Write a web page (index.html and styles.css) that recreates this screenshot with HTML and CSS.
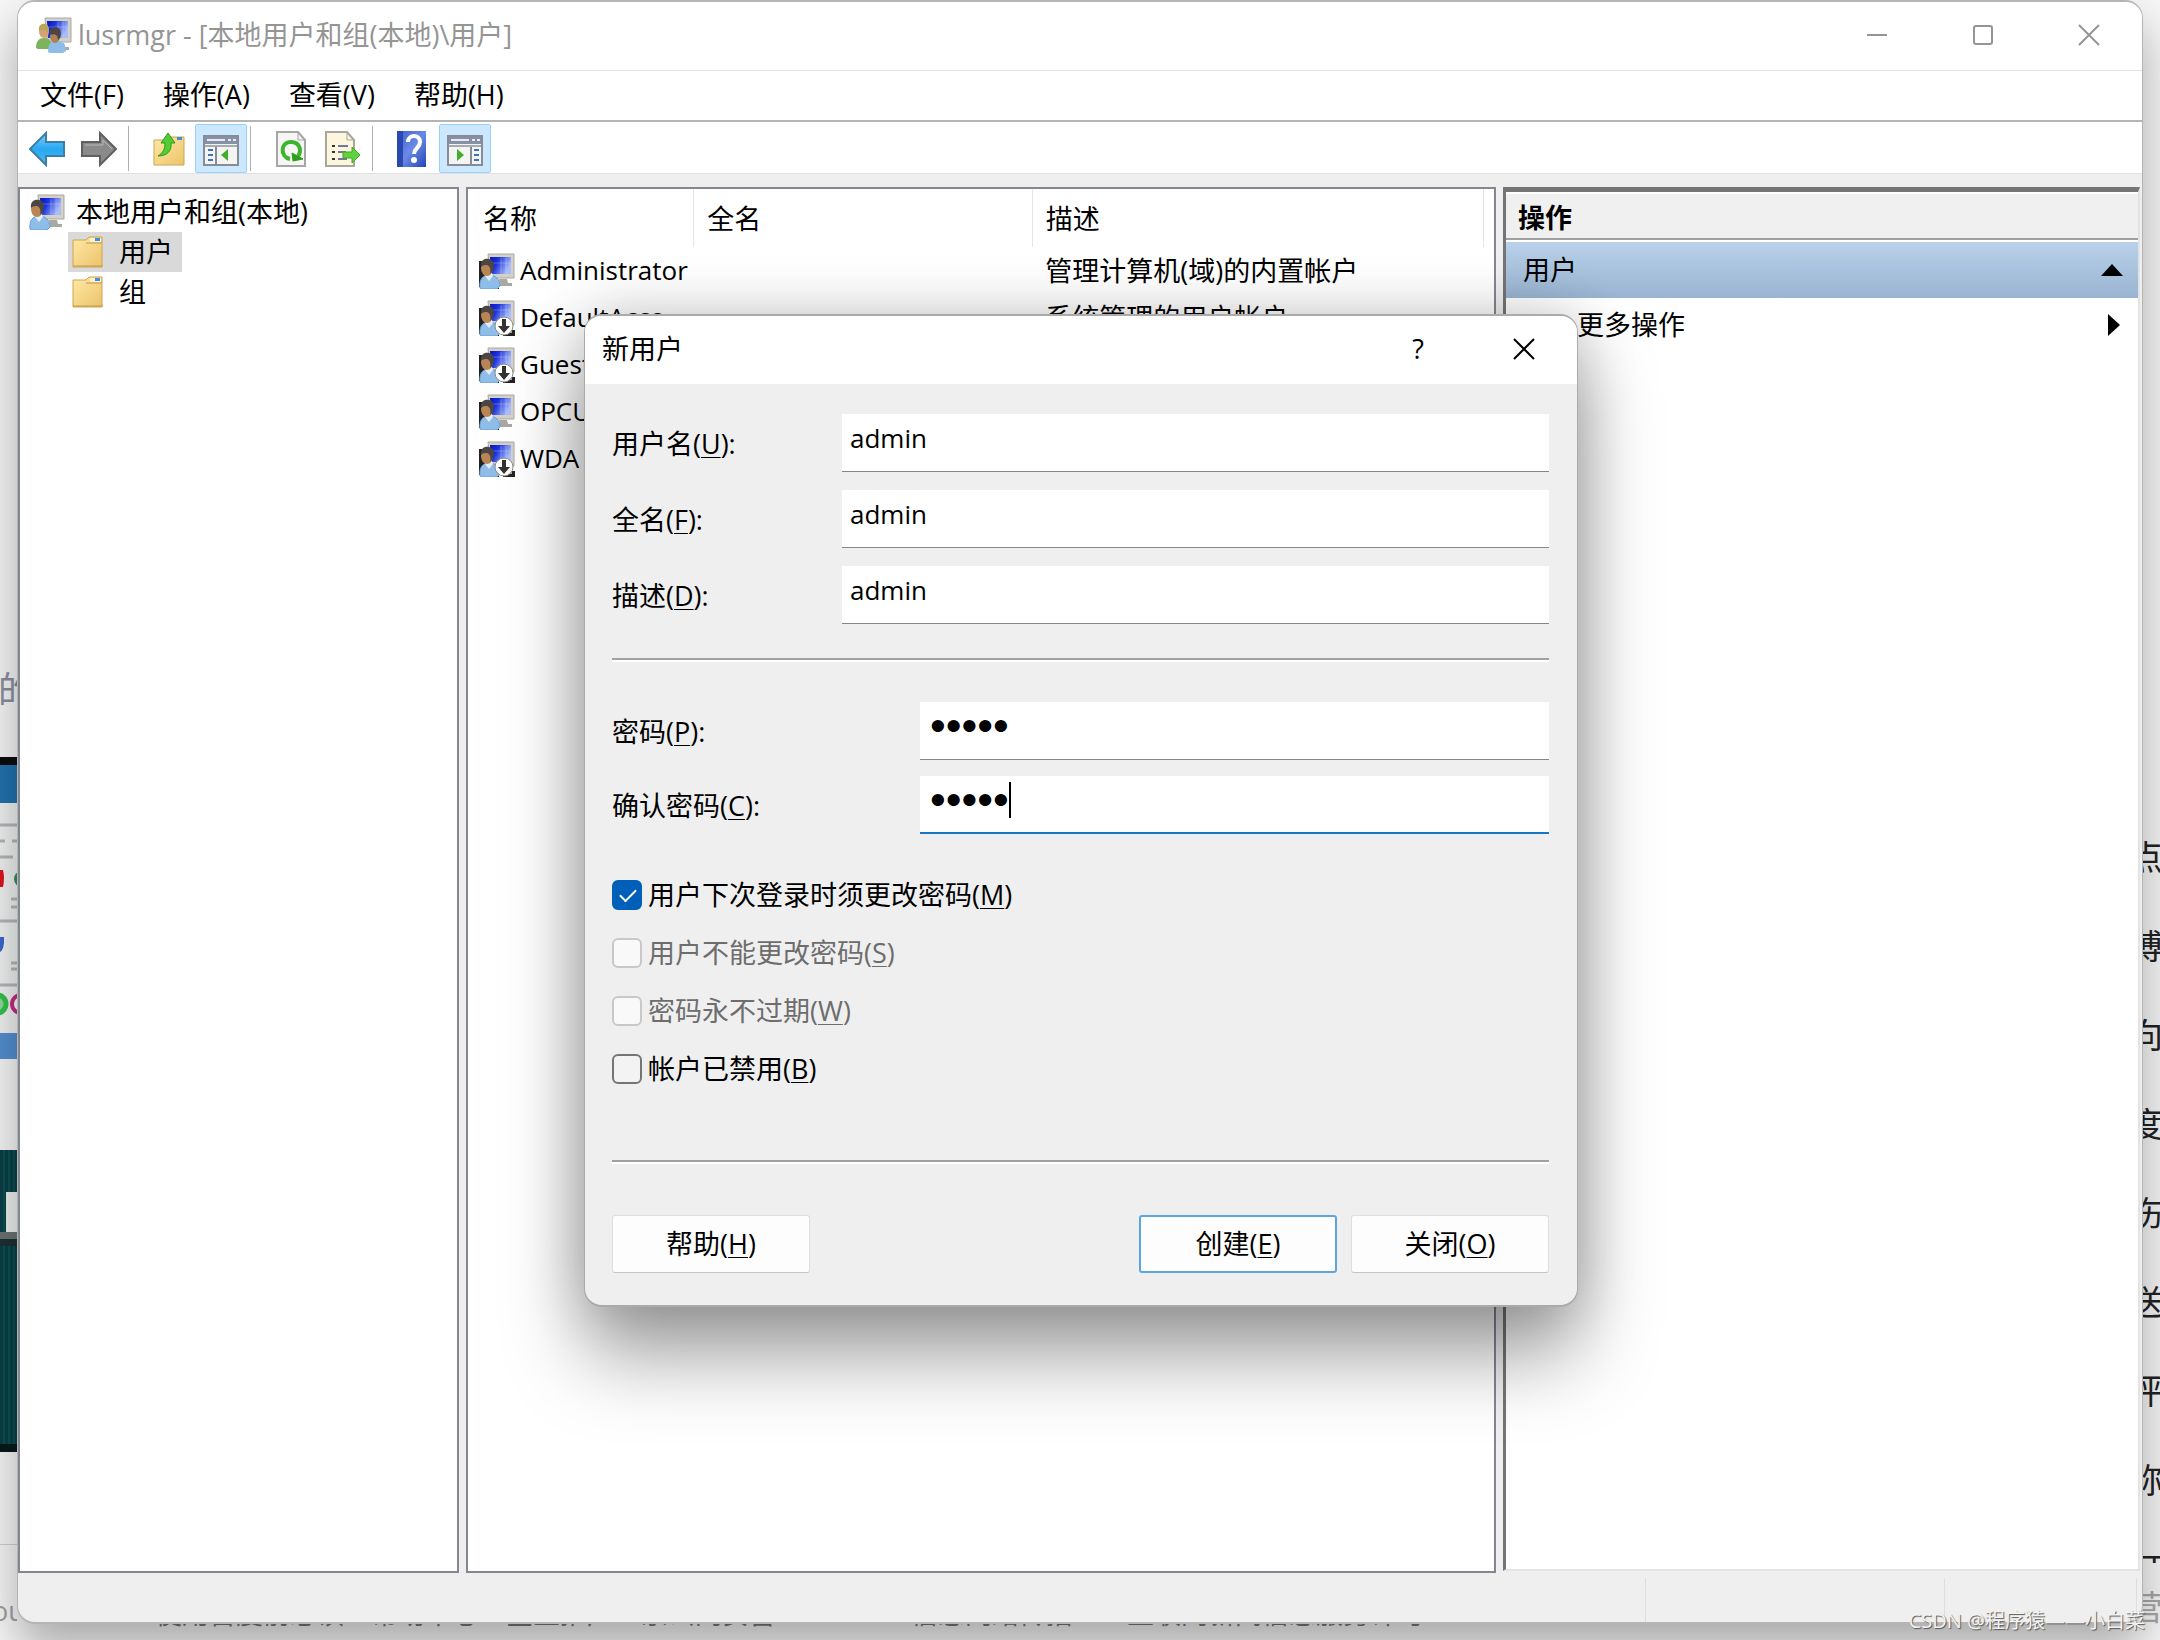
FILE: index.html
```html
<!DOCTYPE html>
<html lang="zh-CN">
<head>
    <meta charset="UTF-8">
    <meta name="viewport" content="width=device-width, initial-scale=1.0">
    <title>lusrmgr - [本地用户和组(本地)\用户]</title>
    <link rel="stylesheet" href="styles.css">
</head>
<body>
    <!-- shared icons -->
    <svg class="defs" width="0" height="0" aria-hidden="true">
        <defs>
            <linearGradient id="screen" x1="0" y1="0" x2="1" y2="0.4">
                <stop offset="0" stop-color="#0a12b8"/>
                <stop offset="0.4" stop-color="#1c34dc"/>
                <stop offset="1" stop-color="#a9bdfb"/>
            </linearGradient>
            <linearGradient id="folderFill" x1="0" y1="0" x2="1" y2="1">
                <stop offset="0" stop-color="#ffe9a6"/>
                <stop offset="1" stop-color="#ecc36a"/>
            </linearGradient>
            <linearGradient id="blueArrow" x1="0" y1="0" x2="0" y2="1">
                <stop offset="0" stop-color="#7fd0fb"/>
                <stop offset="0.5" stop-color="#27a8f2"/>
                <stop offset="1" stop-color="#4fb9ee"/>
            </linearGradient>
            <linearGradient id="helpFill" x1="0" y1="0" x2="1" y2="1">
                <stop offset="0" stop-color="#3a5ed2"/>
                <stop offset="0.5" stop-color="#6b8ae6"/>
                <stop offset="1" stop-color="#2445b4"/>
            </linearGradient>
            <symbol id="monitor" viewBox="0 0 36 36">
                <path d="M20 26h8l1 4h4v3H21z" fill="#a9a9a4"/>
                <path d="M9 1h26v24H11z" fill="#d3d1c8" stroke="#aaa89f"/>
                <path d="M11 4h21v17H12z" fill="url(#screen)"/>
                <path d="M22 5v15M27 5v15M13 10h18" stroke="#fff" stroke-opacity="0.25"/>
            </symbol>
            <symbol id="person" viewBox="0 0 36 36">
                <path d="M1 35c-1-9 3-13 9-13s11 4 11 11l-3 3H3z" fill="#8fbde9" stroke="#6b9cce"/>
                <path d="M6 23l4 5 4-5-1-3H7z" fill="#e4eefa"/>
                <ellipse cx="8" cy="15" rx="6" ry="8" fill="#b98555"/>
                <path d="M2 14C1 7 6 5 10 6c5 1 6 6 4 12l-3 3c1-5 0-8-3-9-2 0-4 0-6 2z" fill="#4b4644"/>
            </symbol>
            <symbol id="user" viewBox="0 0 36 36">
                <use href="#monitor"/>
                <use href="#person"/>
            </symbol>
            <symbol id="userRow" viewBox="0 0 36 36">
                <path d="M0 8h6v26H0zM0 30h20v6H3z" fill="#222"/>
                <use href="#user"/>
            </symbol>
            <symbol id="users" viewBox="0 0 36 36">
                <use href="#monitor"/>
                <path d="M0 31c0-7 3-10 8-10s8 3 8 9l-3 2H2z" fill="#7db35e"/>
                <ellipse cx="8" cy="14" rx="5" ry="7" fill="#d5a373"/>
                <path d="M3 14c-1-6 3-8 6-7 4 1 5 5 3 9-2-3-5-4-9-2z" fill="#b9a55c"/>
                <path d="M12 35c0-8 3-11 8-11 6 0 10 3 10 10l-3 2H14z" fill="#8fbde9"/>
                <ellipse cx="19" cy="19" rx="5" ry="7" fill="#b07f55"/>
                <path d="M14 18c-1-6 3-8 6-8 5 1 6 6 4 11l-2 2c0-4-2-7-8-5z" fill="#4b4644"/>
            </symbol>
            <symbol id="userOff" viewBox="0 0 36 36">
                <path d="M24 30h12v6H24z" fill="#222"/>
                <use href="#userRow"/>
                <circle cx="25" cy="26" r="9" fill="#fff" stroke="#8b8b8b"/>
                <path d="M23 19h4v7h4l-6 7-6-7h4z" fill="#333"/>
            </symbol>
            <symbol id="folder" viewBox="0 0 32 32">
                <path d="M1 4h13l3-3h13v30H1z" fill="url(#folderFill)" stroke="#cda550"/>
                <path d="M18 2h11v4H18z" fill="#fff2cd"/>
                <path d="M23 2h5v3h-5z" fill="#3d8fe0"/>
                <path d="M14 7h16M1 30h30" stroke="#c3984a"/>
            </symbol>
            <symbol id="frame" viewBox="0 0 36 32">
                <path d="M1 1h34v29H1z" fill="#f4f4f2" stroke="#868c98" stroke-width="2"/>
                <path d="M2 2h32v7H2z" fill="#8791a3"/>
                <path d="M4 5h18M25 5h3M30 5h3" stroke="#e6eaf2" stroke-width="2"/>
                <path d="M2 11h32" stroke="#a5abb5" stroke-width="2"/>
            </symbol>
        </defs>
    </svg>

    <div class="strip left">
        <div class="page-word">的的</div>
        <div class="shot phone">
            <i class="bar-black"></i>
            <i class="bar-blue"></i>
            <svg class="apps" viewBox="0 0 18 230">
                <path d="M0 22h18M0 38h5M12 38h6M0 54h13M11 96h7M11 104h7M0 118h18M11 160h7M11 166h7M0 182h18" stroke="#b4b8bb" stroke-width="3"/>
                <path d="M0 67h3q2 8 0 17H0z" fill="#e0141c"/>
                <circle cx="22" cy="76" r="8" fill="#39915a"/>
                <path d="M0 134h4v6q-1 8-4 9z" fill="#3b68d0"/>
                <circle cx="22" cy="138" r="5" fill="#e57a3c"/>
                <circle cx="-3" cy="201" r="9" fill="#8fdc9b" stroke="#35c24b" stroke-width="5"/>
                <circle cx="21" cy="201" r="9" fill="#fff" stroke="#c42c84" stroke-width="4"/>
            </svg>
            <i class="bar-foot"></i>
        </div>
        <div class="shot curtain">
            <i class="letter"></i>
            <i class="shade"></i>
        </div>
        <div class="page-rule"></div>
        <div class="page-foot">ou</div>
    </div>

    <main class="window">
        <header class="titlebar">
            <svg class="app-icon"><use href="#users"/></svg>
            <h1>lusrmgr - [本地用户和组(本地)\用户]</h1>
            <div class="caption">
                <button type="button" aria-label="最小化"><svg viewBox="0 0 20 20"><path d="M0 10h20"/></svg></button>
                <button type="button" aria-label="最大化"><svg viewBox="0 0 20 20"><rect x="1" y="1" width="18" height="18" rx="2"/></svg></button>
                <button type="button" aria-label="关闭"><svg viewBox="0 0 20 20"><path d="M0 0l20 20M20 0L0 20"/></svg></button>
            </div>
        </header>

        <nav class="menubar">
            <button type="button">文件(F)</button>
            <button type="button">操作(A)</button>
            <button type="button">查看(V)</button>
            <button type="button">帮助(H)</button>
        </nav>

        <div class="toolbar">
            <button type="button" aria-label="后退">
                <svg viewBox="0 0 36 36"><path d="M1 18L17 2v9h18v14H17v9z" fill="url(#blueArrow)" stroke="#3d7ea8" stroke-width="2"/></svg>
            </button>
            <button type="button" aria-label="前进">
                <svg viewBox="0 0 36 36"><path d="M35 18L19 2v9H1v14h18v9z" fill="#8a8a8a" stroke="#606060" stroke-width="2"/><path d="M4 14h18V9l9 9" fill="none" stroke="#b9b9b9"/></svg>
            </button>
            <span class="sep"></span>
            <button type="button" aria-label="上一级">
                <svg viewBox="0 0 36 36"><path d="M3 9h13l3-3h14v28H3z" fill="url(#folderFill)" stroke="#cda550"/><path d="M26 6h5v3h-5z" fill="#3d8fe0"/><path d="M7 25c5-3 7-7 7-13h-4l7-10 7 10h-4c1 8-4 13-13 13z" fill="#52cc34" stroke="#2e9a1c"/></svg>
            </button>
            <button type="button" class="pressed" aria-label="显示/隐藏控制台树">
                <svg viewBox="0 0 36 36"><use href="#frame" y="4" width="36" height="32"/><path d="M13 16v17" stroke="#868c98" stroke-width="2"/><path d="M5 19h5M5 24h5M5 29h5" stroke="#3f74b8" stroke-width="2"/><path d="M25 18v12l-7-6z" fill="#3fae2a"/></svg>
            </button>
            <span class="sep"></span>
            <button type="button" aria-label="刷新">
                <svg viewBox="0 0 36 36"><path d="M4 1h21l7 8v26H4z" fill="#f6f6f4" stroke="#a5a5a5" stroke-width="2"/><path d="M25 1v8h7" fill="none" stroke="#a5a5a5"/><path d="M17 28c-10-2-10-17 1-17 9 0 11 9 7 14" fill="none" stroke="#3bb52c" stroke-width="4"/><path d="M19 22l11 6-10 2z" fill="#2c9e1e" stroke="#2c9e1e"/></svg>
            </button>
            <button type="button" aria-label="导出列表">
                <svg viewBox="0 0 36 36"><path d="M1 1h21l7 8v26H1z" fill="#fcf6df" stroke="#a9a79c" stroke-width="2"/><path d="M22 1v8h7" fill="none" stroke="#a9a79c"/><path d="M7 15h3M7 21h3M7 28h3" stroke="#333" stroke-width="2"/><path d="M13 15h10M13 21h8M13 28h9" stroke="#77749a" stroke-width="2"/><path d="M18 21h9v-5l8 8-8 8v-5h-9z" fill="#5fd33c" stroke="#43a82c"/></svg>
            </button>
            <span class="sep"></span>
            <button type="button" aria-label="帮助">
                <svg viewBox="0 0 36 36"><path d="M2 0h29v36H2z" fill="url(#helpFill)"/><path d="M2 0h6v36H2z" fill="#2a48b0"/><path d="M13 11c0-8 12-8 12 0 0 6-6 6-6 12" fill="none" stroke="#fff" stroke-width="4"/><circle cx="19" cy="29" r="3" fill="#fff"/></svg>
            </button>
            <button type="button" class="pressed" aria-label="显示/隐藏操作窗格">
                <svg viewBox="0 0 36 36"><use href="#frame" y="4" width="36" height="32"/><path d="M24 16v17" stroke="#868c98" stroke-width="2"/><path d="M27 19h5M27 24h5M27 29h5" stroke="#3f74b8" stroke-width="2"/><path d="M10 18v12l7-6z" fill="#3fae2a"/></svg>
            </button>
        </div>

        <div class="panes">
            <ul class="pane tree">
                <li><svg class="icon"><use href="#user"/></svg>本地用户和组(本地)</li>
                <li class="child"><span class="node selected"><svg class="folder"><use href="#folder"/></svg>用户</span></li>
                <li class="child"><span class="node"><svg class="folder"><use href="#folder"/></svg>组</span></li>
            </ul>

            <div class="pane list">
                <table>
                    <colgroup><col class="c-name"><col class="c-full"><col class="c-desc"><col></colgroup>
                    <thead>
                        <tr><th>名称</th><th>全名</th><th>描述</th><th></th></tr>
                    </thead>
                    <tbody>
                        <tr><td><svg class="icon"><use href="#userRow"/></svg>Administrator</td><td></td><td>管理计算机(域)的内置帐户</td><td></td></tr>
                        <tr><td><svg class="icon"><use href="#userOff"/></svg>DefaultAcco...</td><td></td><td>系统管理的用户帐户</td><td></td></tr>
                        <tr><td><svg class="icon"><use href="#userOff"/></svg>Guest</td><td></td><td></td><td></td></tr>
                        <tr><td><svg class="icon"><use href="#userRow"/></svg>OPCU</td><td></td><td></td><td></td></tr>
                        <tr><td><svg class="icon"><use href="#userOff"/></svg>WDA</td><td></td><td></td><td></td></tr>
                    </tbody>
                </table>
            </div>

            <aside class="actions">
                <h2>操作</h2>
                <button type="button" class="group">用户<svg viewBox="0 0 22 12"><path d="M0 12L11 0l11 12z"/></svg></button>
                <button type="button" class="more">更多操作<svg viewBox="0 0 12 22"><path d="M0 0l12 11L0 22z"/></svg></button>
            </aside>
        </div>

        <footer class="statusbar"><span></span><span></span><span></span></footer>

        <form class="dialog" role="dialog" aria-labelledby="dialog-title">
            <div class="dialog-title">
                <h2 id="dialog-title">新用户</h2>
                <button type="button" aria-label="说明">?</button>
                <button type="button" aria-label="关闭"><svg viewBox="0 0 20 20"><path d="M0 0l20 20M20 0L0 20"/></svg></button>
            </div>
            <div class="dialog-body">
                <div class="fields">
                    <label for="username">用户名(<u>U</u>):</label>
                    <input type="text" id="username" value="admin">
                    <label for="fullname">全名(<u>F</u>):</label>
                    <input type="text" id="fullname" value="admin">
                    <label for="desc">描述(<u>D</u>):</label>
                    <input type="text" id="desc" value="admin">
                </div>
                <hr>
                <div class="fields secret">
                    <label for="password">密码(<u>P</u>):</label>
                    <input type="password" id="password" value="admin">
                    <label for="confirm">确认密码(<u>C</u>):</label>
                    <div class="focused">
                        <input type="password" id="confirm" value="admin">
                        <span class="caret"></span>
                    </div>
                </div>
                <div class="checks">
                    <label><input type="checkbox" checked>用户下次登录时须更改密码(<u>M</u>)</label>
                    <label class="off"><input type="checkbox" disabled>用户不能更改密码(<u>S</u>)</label>
                    <label class="off"><input type="checkbox" disabled>密码永不过期(<u>W</u>)</label>
                    <label><input type="checkbox">帐户已禁用(<u>B</u>)</label>
                </div>
                <hr>
                <div class="buttons">
                    <button type="button" class="help">帮助(<u>H</u>)</button>
                    <button type="button" class="default">创建(<u>E</u>)</button>
                    <button type="button">关闭(<u>O</u>)</button>
                </div>
            </div>
        </form>
    </main>

    <div class="strip right">
        <span>点</span>
        <span>博</span>
        <span>向</span>
        <span>度</span>
        <span>伤</span>
        <span>送</span>
        <span>评</span>
        <span>称</span>
        <span class="cut">订</span>
        <span class="dim">营</span>
    </div>

    <div class="strip bottom"><p>使用百度前必读　帮助中心　企业推广　京公网安备　　　　　信息网络传播　　互联网新闻信息服务许可</p></div>
    <div class="watermark">CSDN @程序猿——小白菜</div>
</body>
</html>
```

FILE: styles.css
```css
* {
    box-sizing: border-box;
}
body {
    position: relative;
    display: grid;
    grid-template-columns: 17px 1fr 17px;
    grid-template-rows: 1fr 16px;
    min-height: 100vh;
    margin: 0;
    overflow: hidden;
    background: #f7f7f7;
    color: #000;
    font-family: "Open Sans", "Noto Sans CJK SC", sans-serif;
    font-size: 27px;
    line-height: 36px;
}
.defs {
    position: absolute;
}
h1, h2, p, ul {
    margin: 0;
    padding: 0;
    font-size: 27px;
    font-weight: normal;
}
button, input {
    font: inherit;
    color: inherit;
}
button {
    padding: 0;
    border: 0;
    background: none;
}
u {
    text-decoration-thickness: 1px;
    text-underline-offset: 3px;
}

/* page behind the window */
.strip {
    overflow: hidden;
    min-width: 0;
    white-space: nowrap;
}
.left {
    display: flex;
    flex-direction: column;
    grid-row: 1 / 3;
    padding-top: 666px;
}
.page-word {
    height: 91px;
    color: #8a90a0;
    font-size: 36px;
    line-height: 48px;
    text-indent: -38px;
}
.shot {
    display: flex;
    flex-direction: column;
}
.phone {
    height: 302px;
    background: #f1f3f3;
}
.bar-black {
    height: 8px;
    background: #0c0c0e;
}
.bar-blue {
    height: 38px;
    background: #2272b0;
}
.apps {
    width: 18px;
    height: 230px;
}
.bar-foot {
    height: 26px;
    background: #5490d2;
}
.curtain {
    height: 302px;
    margin-top: 91px;
    background: repeating-linear-gradient(90deg, #0b3f45 0 3px, #0a5158 3px 5px);
    border-bottom: 8px solid #071a18;
}
.letter {
    height: 40px;
    margin-top: 42px;
    background: linear-gradient(90deg, transparent 6px, #eef2f1 6px);
}
.shade {
    height: 14px;
    background: linear-gradient(#6c7473 50%, #1d3030 50%);
}
.page-rule {
    height: 1px;
    margin-top: 92px;
    background: #d0d0d0;
}
.page-foot {
    margin-top: 48px;
    color: #a0a0a0;
    font-size: 27px;
    text-indent: -8px;
}
.right {
    display: flex;
    flex-direction: column;
    grid-column: 3;
    grid-row: 1 / 3;
    padding-top: 813px;
    color: #222;
    font-size: 34px;
}
.right span {
    height: 89px;
    line-height: 89px;
    margin-left: -14px;
}
.right .cut {
    height: 38px;
    overflow: hidden;
}
.right .dim {
    height: 76px;
    color: #a8a8a8;
}
.bottom {
    grid-column: 2;
    grid-row: 2;
    padding-left: 138px;
    color: #777;
}
.bottom p {
    margin-top: -28px;
}
.watermark {
    position: absolute;
    right: 15px;
    bottom: 5px;
    z-index: 3;
    color: #f2f2f2;
    font-size: 20px;
    line-height: 28px;
    text-shadow: 1px 1px 1px #555;
}

/* console window */
.window {
    position: relative;
    z-index: 1;
    display: flex;
    flex-direction: column;
    grid-column: 2;
    grid-row: 1;
    border: 2px solid #b5b5b5;
    border-left-width: 1px;
    border-right-width: 1px;
    border-radius: 18px;
    background: #efefef;
    box-shadow: 0 24px 48px rgba(0, 0, 0, 0.32);
}
.titlebar {
    display: flex;
    align-items: center;
    height: 69px;
    padding: 0 0 3px 18px;
    border-bottom: 1px solid #e5e5e5;
    border-radius: 16px 16px 0 0;
    background: #fff;
    color: #959595;
}
.app-icon {
    width: 36px;
    height: 36px;
    margin-right: 6px;
}
.caption {
    display: flex;
    margin-left: auto;
}
.caption button {
    width: 106px;
    height: 64px;
}
.caption svg, .dialog-title svg {
    width: 20px;
    height: 20px;
    overflow: visible;
    fill: none;
    stroke: #959595;
    stroke-width: 2px;
}
.menubar {
    display: flex;
    gap: 39px;
    height: 49px;
    padding: 0 0 2px 22px;
    background: #fff;
}
.toolbar {
    display: flex;
    height: 54px;
    padding-left: 3px;
    border-top: 2px solid #b4b4b4;
    border-bottom: 1px solid #e2e2e2;
    background: #fff;
}
.toolbar button {
    display: grid;
    place-items: center;
    width: 52px;
    height: 49px;
    margin-top: 2px;
    border: 1px solid transparent;
    border-radius: 2px;
}
.toolbar button.pressed {
    border-color: #99d1ff;
    background: #cce8ff;
}
.toolbar svg {
    width: 36px;
    height: 36px;
}
.sep {
    width: 1px;
    margin: 4px 14px 2px 3px;
    background: #b0b0b0;
}
.panes {
    display: grid;
    grid-template-columns: 441fr 1030fr 637fr;
    gap: 7px;
    flex: 1;
    padding: 13px 2px 0 0;
}
.pane {
    border: 2px solid #828790;
    background: #fff;
}
.tree {
    padding: 3px 9px;
    list-style: none;
}
.tree li {
    display: flex;
    align-items: center;
    height: 40px;
}
.icon {
    flex: none;
    width: 36px;
    height: 36px;
}
.tree .icon {
    margin-right: 11px;
}
.tree .child {
    padding-left: 39px;
}
.node {
    display: flex;
    align-items: center;
    height: 40px;
    padding: 0 9px 0 4px;
}
.selected {
    background: #d9d9d9;
}
.folder {
    width: 32px;
    height: 32px;
    margin-right: 15px;
}
.list {
    overflow: hidden;
}
.list table {
    width: 100%;
    table-layout: fixed;
    border-collapse: collapse;
    font-size: 27px;
}
.c-name {
    width: 22%;
}
.c-full {
    width: 33%;
}
.c-desc {
    width: 44%;
}
.list th {
    height: 58px;
    padding: 2px 13px 0;
    border-right: 1px solid #e5e5e5;
    font-weight: normal;
    text-align: left;
}
.list th:first-child {
    padding-left: 15px;
}
.list th:last-child {
    border: 0;
}
.list td {
    height: 47px;
    padding: 0 13px;
    white-space: nowrap;
}
.list td:first-child {
    padding: 0 0 0 11px;
    font-size: 26px;
}
.list .icon {
    margin: -6px 5px 0 0;
    vertical-align: middle;
}
.actions {
    display: flex;
    flex-direction: column;
    margin-bottom: 2px;
    border: 2px solid #e3e3e3;
    border-top: 5px solid #757575;
    border-left: 3px solid #757575;
    background: #fff;
}
.actions h2 {
    height: 46px;
    margin-top: 2px;
    padding-left: 12px;
    border-bottom: 2px solid #a0a0a0;
    background: #f0f0f0;
    font-weight: bold;
    line-height: 47px;
}
.actions button {
    display: flex;
    align-items: center;
    justify-content: space-between;
    height: 56px;
    padding: 0 15px 0 17px;
}
.actions .group {
    margin-top: 2px;
    background: linear-gradient(#b9d1ea, #99b4d1);
}
.actions .more {
    height: 54px;
    padding: 0 18px 0 71px;
}
.group svg {
    width: 22px;
    height: 12px;
}
.more svg {
    width: 12px;
    height: 22px;
}
.statusbar {
    display: flex;
    justify-content: flex-end;
    height: 49px;
    padding: 5px 5px 0 0;
}
.statusbar span {
    width: 192px;
    border-right: 1px solid #dedede;
}
.statusbar span:nth-child(2) {
    width: 299px;
}

/* new user dialog */
.dialog {
    position: absolute;
    inset: 0 0 4px 2px;
    z-index: 2;
    width: 994px;
    height: fit-content;
    margin: auto;
    border: 2px solid #aaa;
    border-right-width: 1px;
    border-left-width: 1px;
    border-radius: 18px;
    background: #efefef;
    box-shadow: 0 50px 80px rgba(0, 0, 0, 0.36), 0 0 60px rgba(0, 0, 0, 0.2);
}
.dialog-title {
    display: flex;
    align-items: center;
    height: 68px;
    padding: 0 0 2px 17px;
    border-radius: 16px 16px 0 0;
    background: #fff;
}
.dialog-title h2 {
    margin-right: auto;
}
.dialog-title button {
    width: 106px;
    height: 62px;
}
.dialog-title svg {
    stroke: #000;
}
.dialog-body {
    padding: 30px 28px 32px 27px;
}
.fields {
    display: grid;
    grid-template-columns: 230px 1fr;
    row-gap: 18px;
    align-items: center;
}
.secret {
    grid-template-columns: 308px 1fr;
    row-gap: 16px;
}
.fields label {
    padding-top: 3px;
}
.fields input {
    display: block;
    width: 100%;
    height: 58px;
    padding: 0 8px 8px;
    border: 0;
    border-bottom: 1px solid #868686;
    outline: 0;
    background: #fff;
    font-size: 26px;
}
.fields input[type="password"] {
    padding-left: 10px;
    font-family: "Liberation Sans", sans-serif;
    font-size: 45px;
}
.focused {
    position: relative;
}
.focused input {
    border-bottom: 2px solid #1975c5;
}
.caret {
    position: absolute;
    top: 6px;
    left: 89px;
    width: 2px;
    height: 36px;
    background: #000;
}
hr {
    height: 4px;
    margin: 34px 0 40px;
    border: 0;
    border-top: 2px solid #a0a0a0;
    border-bottom: 2px solid #fff;
}
.checks {
    display: flex;
    flex-direction: column;
    align-items: flex-start;
    gap: 16px;
    margin: 40px 0 70px;
}
.checks label {
    display: flex;
    align-items: center;
    height: 42px;
}
.checks input {
    appearance: none;
    width: 30px;
    height: 30px;
    margin: 0 6px 0 0;
    border: 2px solid #757575;
    border-radius: 6px;
    background: #f3f3f3;
}
.checks input:checked {
    border-color: #005fb8;
    background: #005fb8;
}
.checks input:checked::before {
    content: "";
    display: block;
    width: 14px;
    height: 7px;
    margin: 7px 0 0 6px;
    border: solid #fff;
    border-width: 0 0 2px 2px;
    transform: rotate(-45deg);
}
.checks input:disabled {
    border-color: #c8c8c8;
    background: #f9f9f9;
}
.off {
    color: #6d6d6d;
}
.checks + hr {
    margin-bottom: 51px;
}
.buttons {
    display: flex;
    gap: 14px;
}
.buttons button {
    width: 198px;
    height: 58px;
    border: 1px solid #dedede;
    border-bottom-color: #c4c4c4;
    border-radius: 3px;
    background: #fdfdfd;
}
.buttons .default {
    border: 2px solid #5ba6e0;
}
.buttons .help {
    margin-right: auto;
}
```
